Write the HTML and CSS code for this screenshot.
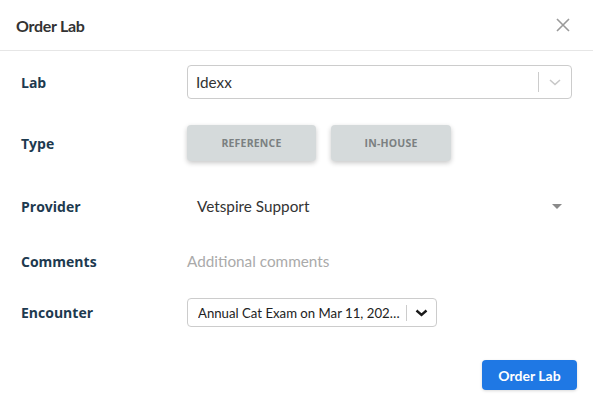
FILE: index.html
```html
<!DOCTYPE html>
<html>
<head>
<meta charset="utf-8">
<link rel="stylesheet" href="styles.css">
</head>
<body>
<div class="modal">
  <div class="header">
    <div class="title">Order Lab</div>
    <svg class="close" width="14" height="14" viewBox="0 0 14 14"><path d="M1 1L13 13M13 1L1 13" stroke="#9a9a9a" stroke-width="1.6" fill="none"/></svg>
  </div>
  <div class="body">
    <div class="row r-lab">
      <div class="label">Lab</div>
      <div class="select lab-select">
        <span class="value">Idexx</span>
        <span class="sep"></span>
        <span class="ind"><svg width="12" height="7" viewBox="0 0 12 7"><path d="M1 1L6 5.5L11 1" stroke="#c8c8c8" stroke-width="1.6" fill="none"/></svg></span>
      </div>
    </div>
    <div class="row r-type">
      <div class="label">Type</div>
      <div class="btns">
        <div class="tbtn ref">REFERENCE</div>
        <div class="tbtn inh">IN-HOUSE</div>
      </div>
    </div>
    <div class="row r-prov">
      <div class="label">Provider</div>
      <div class="prov">
        <span class="pval">Vetspire Support</span>
        <svg width="10" height="5" viewBox="0 0 10 5"><path d="M0 0H10L5 5Z" fill="#8a8a8a"/></svg>
      </div>
    </div>
    <div class="row r-com">
      <div class="label">Comments</div>
      <div class="placeholder">Additional comments</div>
    </div>
    <div class="row r-enc">
      <div class="label">Encounter</div>
      <div class="select enc-select">
        <span class="evalue">Annual Cat Exam on Mar 11, 202…</span>
        <span class="esep"></span>
        <span class="eind"><svg width="13" height="8" viewBox="0 0 13 8"><path d="M1.5 1.5L6.5 6L11.5 1.5" stroke="#1a1a1a" stroke-width="2.4" fill="none"/></svg></span>
      </div>
    </div>
  </div>
  <div class="footer">
    <div class="primary">Order Lab</div>
  </div>
</div>
</body>
</html>
```
FILE: styles.css
```css
* { box-sizing: border-box; }
html, body { margin: 0; padding: 0; background: #fff; }
body { font-family: "Lato", "Open Sans", sans-serif; color: #333; width: 593px; height: 403px; overflow: hidden; }
.modal { width: 593px; }
.header { height: 51px; border-bottom: 1px solid #e6e6e6; display: flex; align-items: center; justify-content: space-between; padding: 0 23px 0 16px; }
.title { font-family: "Lato", sans-serif; font-weight: 700; font-size: 16px; color: #333; letter-spacing: -0.3px; }
.close { display: block; }
.body { padding: 14px 21px 0 21px; display: flex; flex-direction: column; }
.row { display: flex; align-items: center; }
.label { width: 166px; flex: none; font-family: "Open Sans", sans-serif; font-weight: 700; font-size: 14px; color: #1d3a4f; }
.r-lab { height: 34px; }
.r-type { height: 36px; margin-top: 26px; }
.r-prov { height: 34px; margin-top: 28px; }
.r-com { height: 34px; margin-top: 21px; }
.r-enc { height: 29px; margin-top: 20px; }
.select { border: 1px solid #cccccc; border-radius: 4px; display: flex; align-items: center; background: #fff; }
.lab-select { flex: 1; height: 34px; padding-left: 8px; }
.value { flex: 1; font-size: 15.3px; color: #333; }
.sep { width: 1px; height: 20px; background: #cccccc; }
.ind { width: 32px; display: flex; justify-content: center; align-items: center; }
.btns { display: flex; gap: 15px; }
.tbtn { height: 36px; background: #d5dadb; border-radius: 4px; box-shadow: 0 2px 5px rgba(0,0,0,0.22); display: flex; align-items: center; justify-content: center; font-family: "Open Sans", sans-serif; font-weight: 700; font-size: 10.5px; color: #7b8081; letter-spacing: 0.2px; }
.ref { width: 129px; }
.inh { width: 120px; }
.prov { flex: 1; display: flex; align-items: center; justify-content: space-between; padding: 0 10px 0 10px; }
.pval { font-size: 15.3px; color: #333; }
.placeholder { font-size: 15.3px; color: #aaaaaa; }
.enc-select { width: 250px; height: 29px; padding-left: 10px; }
.evalue { flex: 1; font-size: 13.2px; color: #222; white-space: nowrap; overflow: hidden; }
.esep { width: 1px; height: 16px; background: #cccccc; }
.eind { width: 29px; display: flex; justify-content: center; align-items: center; }
.footer { display: flex; justify-content: flex-end; padding: 33px 16px 0 0; }
.primary { width: 95px; height: 30px; background: #1f78e4; border-radius: 4px; color: #fff; font-family: "Lato", sans-serif; font-weight: 700; font-size: 14px; display: flex; align-items: center; justify-content: center; box-shadow: 0 1px 3px rgba(0,0,0,0.15); }
```
